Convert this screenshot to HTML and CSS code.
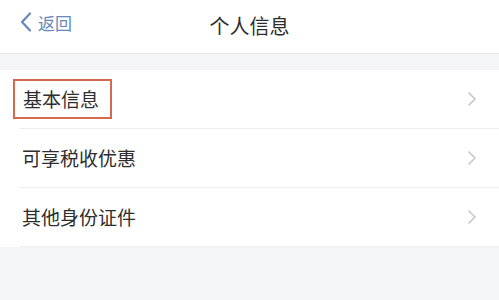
FILE: index.html
```html
<!DOCTYPE html>
<html lang="zh">
<head>
<meta charset="utf-8">
<link rel="stylesheet" href="styles.css">
</head>
<body>
<div class="page">
  <header class="nav">
    <div class="back">
      <svg class="back-icon" width="12" height="20" viewBox="0 0 12 20"><path d="M10 1.5 L2 10 L10 18.5" fill="none" stroke="#6688bb" stroke-width="2.2" stroke-linecap="round" stroke-linejoin="round"/></svg>
      <span>返回</span>
    </div>
    <div class="title">个人信息</div>
  </header>
  <div class="gap"></div>
  <ul class="list">
    <li class="row"><span class="label boxed">基本信息</span><svg class="chev" width="10" height="16" viewBox="0 0 10 16"><path d="M1.5 1.5 L8 8 L1.5 14.5" fill="none" stroke="#c8c8cc" stroke-width="1.6"/></svg></li>
    <li class="row"><span class="label">可享税收优惠</span><svg class="chev" width="10" height="16" viewBox="0 0 10 16"><path d="M1.5 1.5 L8 8 L1.5 14.5" fill="none" stroke="#c8c8cc" stroke-width="1.6"/></svg></li>
    <li class="row"><span class="label">其他身份证件</span><svg class="chev" width="10" height="16" viewBox="0 0 10 16"><path d="M1.5 1.5 L8 8 L1.5 14.5" fill="none" stroke="#c8c8cc" stroke-width="1.6"/></svg></li>
  </ul>
</div>
</body>
</html>
```
FILE: styles.css
```css
html, body { margin: 0; padding: 0; }
body {
  width: 499px;
  height: 300px;
  background: #f4f5f7;
  font-family: "Noto Sans CJK SC", "Noto Sans", sans-serif;
  color: #2e2e2e;
  overflow: hidden;
}
.nav {
  position: relative;
  height: 53px;
  background: #fff;
  border-bottom: 1px solid #e6e6e8;
  display: flex;
  align-items: center;
  justify-content: center;
}
.back {
  position: absolute;
  left: 20px;
  top: 12px;
  display: flex;
  align-items: center;
  gap: 6px;
  color: #6688bb;
  font-size: 17px;
  height: 20px;
}
.back-icon { display: block; }
.title {
  font-size: 20px;
  color: #2e2e2e;
  line-height: 20px;
  margin-top: -2px;
}
.gap { height: 16px; }
.list {
  list-style: none;
  margin: 0;
  padding: 0;
  background: #fff;
}
.row {
  height: 58px;
  margin-left: 20px;
  padding-right: 22px;
  border-bottom: 1px solid #eeeef0;
  display: flex;
  align-items: center;
  justify-content: space-between;
}
.label {
  font-size: 19px;
  line-height: 24px;
  padding-left: 2px;
}
.boxed {
  outline: 2px solid #d4694c;
  outline-offset: 0;
  padding: 6px 11px 6px 8px;
  margin-left: -5px;
}
.chev { display: block; }
```
